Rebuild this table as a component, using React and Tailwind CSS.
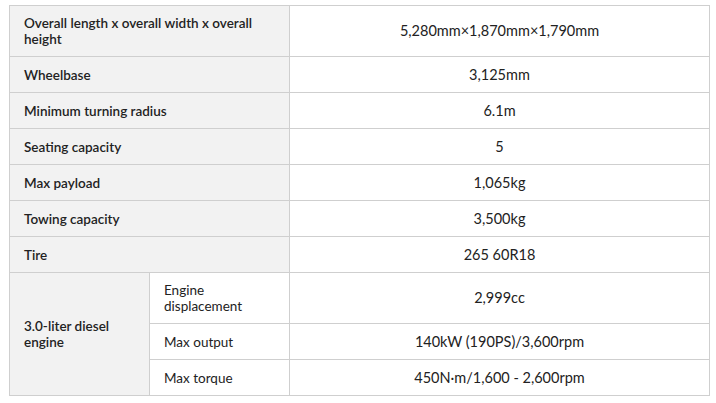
const rows = [
  { label: "Overall length x overall width x overall height", value: "5,280mm×1,870mm×1,790mm", tall: true },
  { label: "Wheelbase", value: "3,125mm" },
  { label: "Minimum turning radius", value: "6.1m" },
  { label: "Seating capacity", value: "5" },
  { label: "Max payload", value: "1,065kg" },
  { label: "Towing capacity", value: "3,500kg" },
  { label: "Tire", value: "265 60R18" },
];

const engine = [
  { label: "Engine displacement", value: "2,999cc", tall: true },
  { label: "Max output", value: "140kW (190PS)/3,600rpm" },
  { label: "Max torque", value: "450N·m/1,600 - 2,600rpm" },
];

export default function App() {
  return (
    <div className="min-h-screen bg-white pt-[5px] pl-[9px] font-['Lato','Liberation_Sans',sans-serif] text-[13.5px] leading-[16px] text-[#222]">
      <table className="w-[700px] table-fixed border-collapse">
        <colgroup>
          <col className="w-[140px]" />
          <col className="w-[140px]" />
          <col className="w-[420px]" />
        </colgroup>
        <tbody>
          {rows.map((r) => (
            <tr key={r.label} className={r.tall ? "h-[51px]" : "h-[36px]"}>
              <th
                colSpan={2}
                className="border border-[#cfcfcf] bg-[#f2f2f2] pl-[14px] pr-4 text-left align-middle font-semibold"
              >
                {r.label}
              </th>
              <td className="border border-[#cfcfcf] text-center align-middle text-[14.5px]">{r.value}</td>
            </tr>
          ))}
          {engine.map((r, i) => (
            <tr key={r.label} className={r.tall ? "h-[51px]" : "h-[36px]"}>
              {i === 0 && (
                <th
                  rowSpan={3}
                  className="border border-[#cfcfcf] bg-[#f2f2f2] pl-[14px] pr-4 text-left align-middle font-semibold"
                >
                  3.0-liter diesel engine
                </th>
              )}
              <td className="border border-[#cfcfcf] bg-white pl-[14px] pr-4 text-left align-middle">
                {r.label}
              </td>
              <td className="border border-[#cfcfcf] text-center align-middle text-[14.5px]">{r.value}</td>
            </tr>
          ))}
        </tbody>
      </table>
    </div>
  );
}
